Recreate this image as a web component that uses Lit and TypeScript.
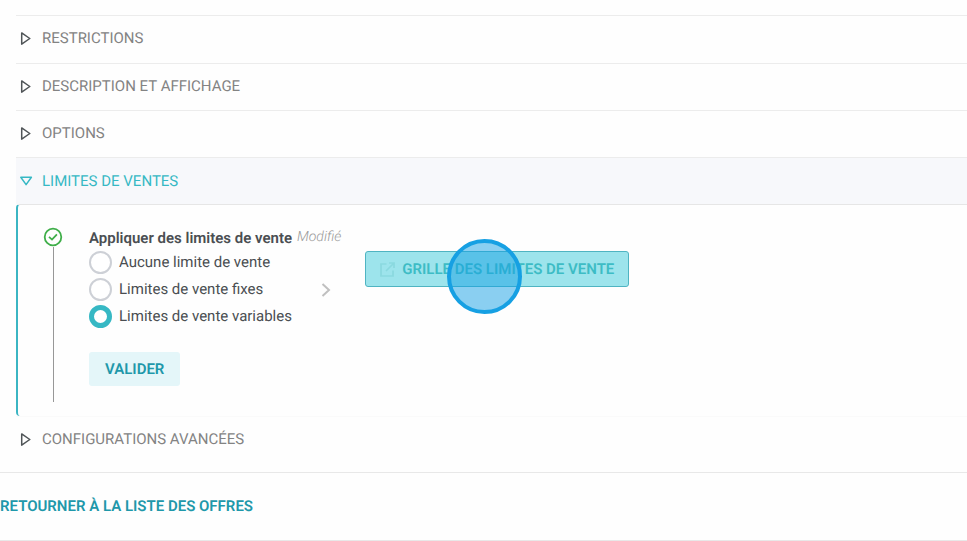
import { LitElement, html, css, svg } from "lit";
import { customElement, state } from "lit/decorators.js";
import { classMap } from "lit/directives/class-map.js";

const triangleRight = svg`<path d="M1.7 0.9 L9.8 6.5 L1.7 12.1 Z" />`;
const triangleDown = svg`<path d="M0.8 2.3 H11.4 L6.1 9.6 Z" />`;

@customElement("section-header")
class SectionHeader extends LitElement {
  static properties = {
    label: { type: String },
    open: { type: Boolean },
  };
  declare label: string;
  declare open: boolean;

  static styles = css`
    :host {
      display: block;
      border-top: 1px solid #ececec;
    }
    :host([plain]) {
      border-top-color: #fafafa;
    }
    .header {
      display: flex;
      align-items: center;
      gap: 9px;
      width: 100%;
      height: 46px;
      padding: 0 4px 2px;
      border: 0;
      background: none;
      color: #838383;
      font: 15px/20px Roboto, sans-serif;
      text-align: left;
      text-rendering: geometricPrecision;
      text-transform: uppercase;
      cursor: pointer;
    }
    .header.open {
      padding-bottom: 0;
      background: #f7f8fb;
      color: #36b8c4;
    }
    .icon {
      width: 13px;
      height: 13px;
      fill: none;
      stroke: #4f5457;
      stroke-width: 1.5;
      stroke-linejoin: round;
    }
    .open .icon {
      stroke: #36b8c4;
    }
  `;

  render() {
    return html`
      <button class=${classMap({ header: true, open: this.open })} aria-expanded=${this.open ? "true" : "false"}>
        <svg class="icon" viewBox="0 0 13 13" aria-hidden="true">
          ${this.open ? triangleDown : triangleRight}
        </svg>
        <span>${this.label}</span>
      </button>
    `;
  }
}

@customElement("app-root")
class AppRoot extends LitElement {
  @state() private selected = "variables";

  private options = [
    { value: "aucune", label: "Aucune limite de vente" },
    { value: "fixes", label: "Limites de vente fixes" },
    { value: "variables", label: "Limites de vente variables" },
  ];

  static styles = css`
    :host {
      display: block;
      min-height: 100vh;
      box-sizing: border-box;
      padding-top: 15px;
      background: #fefefe;
      color: #4a4e52;
      font: 15px/20px Roboto, sans-serif;
      text-rendering: geometricPrecision;
      overflow-x: hidden;
    }
    .sections {
      margin-left: 16px;
    }
    .first {
      padding-bottom: 1px;
    }
    .panel {
      display: flex;
      align-items: stretch;
      border-top: 1px solid #e6e6e6;
      border-left: 2px solid #3bb5c3;
      border-radius: 4px 0 0 4px;
      padding: 22px 0 14px 25px;
    }
    .step {
      display: flex;
      flex-direction: column;
      align-items: center;
      width: 20px;
      margin-right: 26px;
    }
    .check {
      flex: none;
      width: 20px;
      height: 20px;
      fill: none;
      stroke: #3fae49;
      stroke-width: 1.8;
    }
    .line {
      flex: 1;
      width: 1px;
      background: #979797;
    }
    .form {
      margin: 0;
      padding-bottom: 16px;
    }
    .choices {
      margin: 0;
      padding: 0;
      border: 0;
    }
    .title {
      display: flex;
      gap: 5px;
      padding: 0;
      line-height: 22px;
    }
    .name {
      font-weight: 600;
    }
    .modified {
      color: #999;
      font-size: 14px;
      font-style: italic;
      font-weight: 300;
      line-height: 20px;
    }
    .choice {
      display: flex;
      align-items: center;
      gap: 7px;
      height: 27px;
      cursor: pointer;
    }
    .text {
      padding-bottom: 2px;
    }
    .radio {
      appearance: none;
      flex: none;
      box-sizing: border-box;
      width: 23px;
      height: 23px;
      margin: 0;
      border: 2px solid #cdd0d6;
      border-radius: 50%;
      background: #fff;
    }
    .radio:checked {
      border: 5px solid #36b8c4;
    }
    .submit {
      display: block;
      height: 34px;
      margin-top: 22px;
      padding: 0 16px;
      border: 0;
      border-radius: 3px;
      background: #e4f6f9;
      color: #1f98aa;
      font: 600 15px/20px Roboto, sans-serif;
      text-rendering: inherit;
      text-transform: uppercase;
    }
    .chevron {
      width: 10px;
      height: 16px;
      margin: 55px 34px 0 -20px;
      fill: none;
      stroke: #c0c0c0;
      stroke-width: 2;
    }
    .target {
      position: relative;
      align-self: flex-start;
      margin-top: 24px;
    }
    .grid {
      display: flex;
      align-items: center;
      gap: 7px;
      height: 36px;
      padding: 0 14px;
      border: 1px solid #4fb4c2;
      border-radius: 3px;
      background: #9de4ec;
      color: #3dbcc5;
      font: 600 15px/20px Roboto, sans-serif;
      text-rendering: inherit;
      text-transform: uppercase;
      white-space: nowrap;
    }
    .external {
      width: 15px;
      height: 15px;
      fill: none;
      stroke: #8ad9df;
      stroke-width: 1.7;
    }
    .pointer {
      position: absolute;
      top: -12px;
      left: 82px;
      box-sizing: border-box;
      width: 75px;
      height: 75px;
      border: 4px solid #16a0e3;
      border-radius: 50%;
      background: rgba(22, 160, 227, 0.5);
      pointer-events: none;
    }
    .footer {
      margin-top: 9px;
      padding: 23px 0 24px;
      border: solid #e8e8e8;
      border-width: 1px 0;
    }
    .back {
      display: block;
      color: #1f98aa;
      font-weight: 600;
      text-decoration: none;
      text-transform: uppercase;
    }
  `;

  render() {
    return html`
      <div class="sections">
        <section-header class="first" label="Restrictions"></section-header>
        <section-header label="Description et affichage"></section-header>
        <section-header label="Options"></section-header>
        <section-header label="Limites de ventes" open></section-header>
        <div class="panel">
          <div class="step">
            <svg class="check" viewBox="0 0 20 20" aria-hidden="true">
              <circle cx="10" cy="10" r="8.3" />
              <path d="M6 9.9 L9 12.6 L13.9 7.4" />
            </svg>
            <div class="line"></div>
          </div>
          <form class="form" @submit=${(e: Event) => e.preventDefault()}>
            <fieldset class="choices">
              <legend class="title">
                <span class="name">Appliquer des limites de vente</span>
                <span class="modified">Modifié</span>
              </legend>
              ${this.options.map(
                (option) => html`
                  <label class="choice">
                    <input
                      class="radio"
                      type="radio"
                      name="limite"
                      value=${option.value}
                      .checked=${this.selected === option.value}
                      @change=${() => (this.selected = option.value)}
                    />
                    <span class="text">${option.label}</span>
                  </label>
                `
              )}
            </fieldset>
            <button class="submit" type="submit">Valider</button>
          </form>
          <svg class="chevron" viewBox="0 0 10 16" aria-hidden="true">
            <path d="M1.5 2 L8 8 L1.5 14" />
          </svg>
          <div class="target">
            <button class="grid" type="button">
              <svg class="external" viewBox="0 0 15 15" aria-hidden="true">
                <path d="M6.5 2 H1 V14 H13 V8.5" />
                <path d="M9 1 H14 V6 M14 1 L6 9" />
              </svg>
              <span>Grille des limites de vente</span>
            </button>
            <div class="pointer"></div>
          </div>
        </div>
        <section-header label="Configurations avancées" plain></section-header>
      </div>
      <footer class="footer">
        <a class="back" href="#offres">Retourner à la liste des offres</a>
      </footer>
    `;
  }
}
